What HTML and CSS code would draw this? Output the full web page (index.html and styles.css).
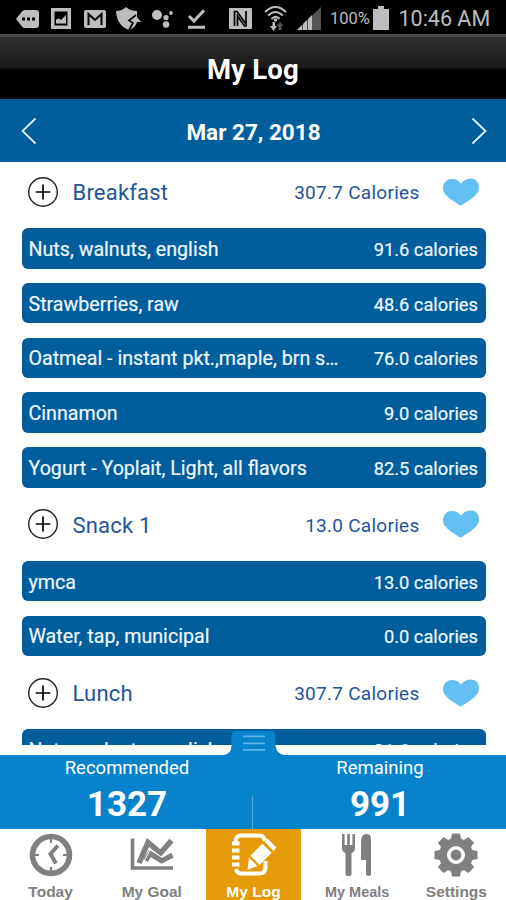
FILE: index.html
```html
<!DOCTYPE html>
<html lang="en">
<head>
<meta charset="utf-8">
<title>My Log</title>
<link rel="stylesheet" href="styles.css">
</head>
<body>
<svg class="defs" aria-hidden="true">
  <symbol id="plus" viewBox="0 0 32 32"><circle cx="16" cy="16" r="14.3" fill="none" stroke="#222" stroke-width="1.4"/><path d="M16 8.6v15M8.7 16h14.6" stroke="#000" stroke-width="1.7"/></symbol>
  <symbol id="heart" viewBox="0 0 36 28"><path d="M18 5.500C20.500 2 24 .4 28 .4C33 .4 36 4 36 10C36 17 25 23 17.300 27.700C10 22.500 0 18 0 10.500C0 5 3.500 1 9 1C13 1 16 2.800 18 5.500Z" fill="#62c0f5"/></symbol>
</svg>
<div class="screen">
  <header class="status">
    <svg class="s-more" viewBox="0 0 23 18"><path d="M0 9 6 1.500Q7 0 9 0H20Q23 0 23 3V15Q23 18 20 18H9Q7 18 6 16.500Z"/><path class="cut" d="M6 7.500h3v3H6zM11 7.500h3v3h-3zM16 7.500h3v3h-3z"/></svg>
    <svg class="s-image" viewBox="0 0 20 21"><path fill-rule="evenodd" d="M0 0H20V21H0ZM3.500 3.500V17.500H16.500V3.500Z"/><path d="M5 15.500v-4l3-1 2 1.500 5-5v8.500z"/></svg>
    <svg class="s-mail" viewBox="0 0 22 18"><rect width="22" height="18" rx="2"/><path class="cutline" d="M4.500 15V4l6.500 6 6.500-6v11"/></svg>
    <svg class="s-shield" viewBox="0 0 25 24"><path d="M0 4Q6 4 10 0Q14 4 21 4V10L25 15H21Q20 20 13 23Q1 19 0 4Z"/><path class="cutline thin" d="M20 8l-7 5.500 4 2.500-4 7"/></svg>
    <svg class="s-assist" viewBox="0 0 21 18"><circle cx="5" cy="5" r="5"/><circle cx="14" cy="7.500" r="2.600"/><circle cx="19" cy="3" r="1.900"/><circle cx="14" cy="14.500" r="3.200"/></svg>
    <svg class="s-check" viewBox="0 0 19 20"><path class="line" d="M2 7l5 5L17 1.200M1 18.300h17"/></svg>
    <svg class="s-nfc" viewBox="0 0 23 21"><rect width="23" height="21" rx="1"/><path class="cutline thin" d="M5.500 18V3.500H8L17 16V3M8.500 18V8l7 10h2"/></svg>
    <svg class="s-wifi" viewBox="0 0 23 25"><path class="line arcs" d="M1 6Q11.500-4 22 6M4.200 9.500Q11.500 2.500 18.800 9.500M7.500 13Q11.500 8.500 15.500 13"/><circle cx="11.500" cy="14" r="1.800"/><path d="M8.500 16h2.500v4h2l-3.500 5L6 20h2.500z"/><path class="dim" d="M14.500 24v-4h-2l3.500-4 3.500 4h-2v4z"/></svg>
    <svg class="s-signal" viewBox="0 0 24 23"><path class="dim" d="M0 23 24 0V23Z"/><path d="M0 23 5 18v5zM6 23v-6l4-4v10zM11 23V12l4-4v15z"/></svg>
    <span class="percent">100%</span>
    <svg class="s-battery" viewBox="0 0 16 24"><path d="M5 0h6v3h5v21H0V3h5z"/></svg>
    <span class="time">10:46 AM</span>
  </header>
  <h1 class="title"><span>My Log</span></h1>
  <nav class="date">
    <svg viewBox="0 0 16 28"><path d="M14.500 1.500 1.500 14l13 12.500"/></svg>
    <span>Mar 27, 2018</span>
    <svg viewBox="0 0 16 28"><path d="M1.500 1.500 14.500 14l-13 12.500"/></svg>
  </nav>
  <main class="log">
    <div class="meal"><svg class="plus"><use href="#plus"/></svg><h2>Breakfast</h2><span class="total">307.7 Calories</span><svg class="heart"><use href="#heart"/></svg></div>
    <div class="item"><span class="name">Nuts, walnuts, english</span><span>91.6 calories</span></div>
    <div class="item"><span class="name">Strawberries, raw</span><span>48.6 calories</span></div>
    <div class="item"><span class="name">Oatmeal - instant pkt.,maple, brn s…</span><span>76.0 calories</span></div>
    <div class="item"><span class="name">Cinnamon</span><span>9.0 calories</span></div>
    <div class="item"><span class="name">Yogurt - Yoplait, Light, all flavors</span><span>82.5 calories</span></div>
    <div class="meal"><svg class="plus"><use href="#plus"/></svg><h2>Snack 1</h2><span class="total">13.0 Calories</span><svg class="heart"><use href="#heart"/></svg></div>
    <div class="item"><span class="name">ymca</span><span>13.0 calories</span></div>
    <div class="item"><span class="name">Water, tap, municipal</span><span>0.0 calories</span></div>
    <div class="meal"><svg class="plus"><use href="#plus"/></svg><h2>Lunch</h2><span class="total">307.7 Calories</span><svg class="heart"><use href="#heart"/></svg></div>
    <div class="item"><span class="name">Nuts, walnuts, english</span><span>91.6 calories</span></div>
  </main>
  <section class="summary">
    <svg class="handle" viewBox="0 0 60 26"><path d="M0 25Q7 24 7.500 16V5Q7.500 1 12 1H47Q51.500 1 51.500 5V16Q53 24 60 25V26H0Z" fill="#0783cb"/><path d="M19 6.300h22M19 13.300h22M19 19.800h22" stroke="#62b5e8" stroke-width="1.800"/></svg>
    <div class="stat"><span>Recommended</span><strong>1327</strong></div>
    <div class="stat"><span>Remaining</span><strong>991</strong></div>
  </section>
  <nav class="tabs">
    <a class="tab"><svg viewBox="0 0 44 44"><circle cx="22" cy="22" r="18.500" fill="none" stroke="currentColor" stroke-width="5.600"/><path d="M29 12.500 21.500 21l5.500 9.500" fill="none" stroke="currentColor" stroke-width="4"/><path d="M22 5v5M22 34v5M5 22h5M34 22h5" stroke="currentColor" stroke-width="2.200"/></svg><span>Today</span></a>
    <a class="tab"><svg viewBox="0 0 44 44"><path d="M2.500 5.500v29.500H43" fill="none" stroke="currentColor" stroke-width="3.600"/><path d="M9 30 18 9.500 30.500 20 41.500 7.500" fill="none" stroke="currentColor" stroke-width="5.500"/><path d="M15.500 27.500 20 20.500 31.500 27.500 42.500 22" fill="none" stroke="currentColor" stroke-width="5.500"/><path d="M12.500 30.500 20.500 16.500 32 24.500 42.500 18.500" fill="none" stroke="#fff" stroke-width="1"/></svg><span>My Goal</span></a>
    <a class="tab active"><svg viewBox="0 0 44 44"><path d="M5 9V6Q6 2.500 10 2.500H29Q33 3 34 8M5 36Q6 40.500 10 40.500H29Q34 40.500 34.500 35V28" fill="none" stroke="currentColor" stroke-width="4"/><path d="M1 8.500h7.500v4H1zM1 15.500h7.500v4H1zM1 22.500h7.500v4H1zM1 29.500h7.500v4H1z" fill="currentColor"/><path d="M33.500 8.500 36.500 5.500 45.500 14.500 42.500 18ZM31.500 10.500 40.500 20 28.500 32 19.500 22.500ZM18 24.500 26.500 33 16.500 37Z" fill="currentColor"/></svg><span>My Log</span></a>
    <a class="tab meals"><svg viewBox="0 0 44 44"><path d="M7 1h2.600v11h2.600V1h2.600v11h2.600V1H20v14q0 4-3.500 5V41q0 2-3 2T10.500 41V20Q7 19 7 15ZM26 27V9Q26 1 31.500 1Q36 1 36 6V41Q36 43 33.500 43T31 41V27Z" fill="currentColor"/></svg><span>My Meals</span></a>
    <a class="tab settings"><svg viewBox="0 0 44 44"><g fill="currentColor"><circle cx="22" cy="22" r="17"/><g id="teeth"><path id="tooth" d="M18 .500h8l1.500 8h-11zM18 43.500h8l1.500-8h-11z"/><use href="#tooth" transform="rotate(45 22 22)"/></g><use href="#teeth" transform="rotate(90 22 22)"/></g><circle cx="22" cy="22" r="7.200" fill="none" stroke="#fff" stroke-width="3.600"/></svg><span>Settings</span></a>
  </nav>
</div>
</body>
</html>
```
FILE: styles.css
```css
* { box-sizing: border-box; }
body { margin: 0; font-family: Roboto, sans-serif; background: #fff; }
svg { display: block; flex: none; overflow: visible; }
.defs { position: absolute; width: 0; height: 0; }
.screen { width: 506px; height: 900px; display: flex; flex-direction: column; overflow: hidden; }

.status { height: 34px; flex: none; background: #000; color: #bdbdbd; display: flex; align-items: center; padding: 3px 0 0 16px; }
.status svg { fill: #bdbdbd; }
.status .cut { fill: #000; }
.status .cutline { fill: none; stroke: #000; stroke-width: 2; }
.status .thin { stroke-width: 1.700; }
.status .line { fill: none; stroke: #bdbdbd; stroke-width: 3; }
.status .arcs { stroke-width: 2; }
.status .dim { fill: #555; }
.s-more { width: 23px; height: 18px; }
.s-image { width: 20px; height: 21px; margin-left: 12px; }
.s-mail { width: 22px; height: 18px; margin-left: 13px; }
.s-shield { width: 25px; height: 24px; margin-left: 10px; }
.s-assist { width: 21px; height: 18px; margin-left: 11px; }
.s-check { width: 19px; height: 20px; margin-left: 14px; }
.s-nfc { width: 23px; height: 21px; margin-left: 23px; }
.s-wifi { width: 23px; height: 25px; margin-left: 12px; }
.s-signal { width: 24px; height: 23px; margin-left: 10px; }
.percent { width: 40px; margin: -1px 0 0 9px; font-size: 16.500px; white-space: nowrap; }
.s-battery { width: 16px; height: 24px; margin: -1px 0 0 3px; }
.time { margin-left: 9.500px; font-size: 21.500px; white-space: nowrap; }

.title { height: 65px; flex: none; margin: 0; display: flex; align-items: center; justify-content: center; padding-top: 2px; border-top: 3px solid #4a4a4a; background: linear-gradient(#2f2f2f 0, #1b1b1b 30px, #000 33px); color: #fff; font-size: 27.500px; font-weight: 700; letter-spacing: .15px; }
.date { height: 63px; flex: none; display: flex; align-items: center; justify-content: space-between; padding: 0 19.500px 0 20.500px; background: #005e9c; color: #fff; font-size: 22.500px; font-weight: 700; }
.date svg { width: 16px; height: 28px; fill: none; stroke: #e4f2fc; stroke-width: 1.800; }
.date span { padding-top: 2px; }

.log { height: 583px; flex: none; overflow: hidden; padding: 0 20.500px 0 21.500px; }
.meal { height: 59px; display: flex; align-items: center; padding: 0 7px 0 5.500px; color: #24549b; }
.plus { width: 32px; height: 32px; }
.meal h2 { flex: 1; margin: 2px 0 0 13.500px; font-size: 22px; font-weight: 400; letter-spacing: .2px; }
.total { margin: 2px 23px 0 0; font-size: 19px; letter-spacing: .27px; }
.heart { width: 36px; height: 28px; }
.item { height: 40.500px; margin: 7.100px 0 14.250px; display: flex; align-items: center; justify-content: space-between; padding: 2px 7.500px 0 7px; border-radius: 6px; background: #005e9c; color: #eef6ff; font-size: 18.300px; white-space: nowrap; -webkit-text-stroke: .2px #eef6ff; }
.name { font-size: 19.650px; }
.item + .item { margin-top: 0; }
.item + .meal { margin-top: -7.100px; }

.summary { position: relative; height: 74px; flex: none; margin-top: 10px; display: flex; background: #0783cb; color: #fff; }
.handle { position: absolute; left: 224px; top: -25px; width: 60px; height: 26px; }
.stat { width: 253px; display: flex; flex-direction: column; align-items: center; }
.stat + .stat::before { content: ""; position: absolute; left: 252px; top: 41px; width: 1px; height: 33px; background: #58a8d9; }
.stat span { margin-top: 2px; padding-left: 1px; font-size: 18.500px; line-height: 23px; }
.stat strong { padding-left: 1px; font-size: 35px; line-height: 50px; }

.tabs { height: 71px; flex: none; display: grid; grid-template-columns: repeat(5, 1fr); background: #fff; font-family: "Liberation Sans", sans-serif; }
.tab { color: #808080; display: flex; flex-direction: column; align-items: center; padding-top: 4px; font-size: 15.500px; font-weight: 700; white-space: nowrap; }
.tab svg { width: 44px; height: 44px; }
.tab span { margin-top: 6px; line-height: 18px; }
.tab.active { margin: 0 2.600px 0 3.600px; background: #e59a07; color: #fff; }
.tab.meals { padding-left: 6px; }
.tab.meals span { font-size: 14.500px; }
.tab.settings { padding-left: 2px; }
```
